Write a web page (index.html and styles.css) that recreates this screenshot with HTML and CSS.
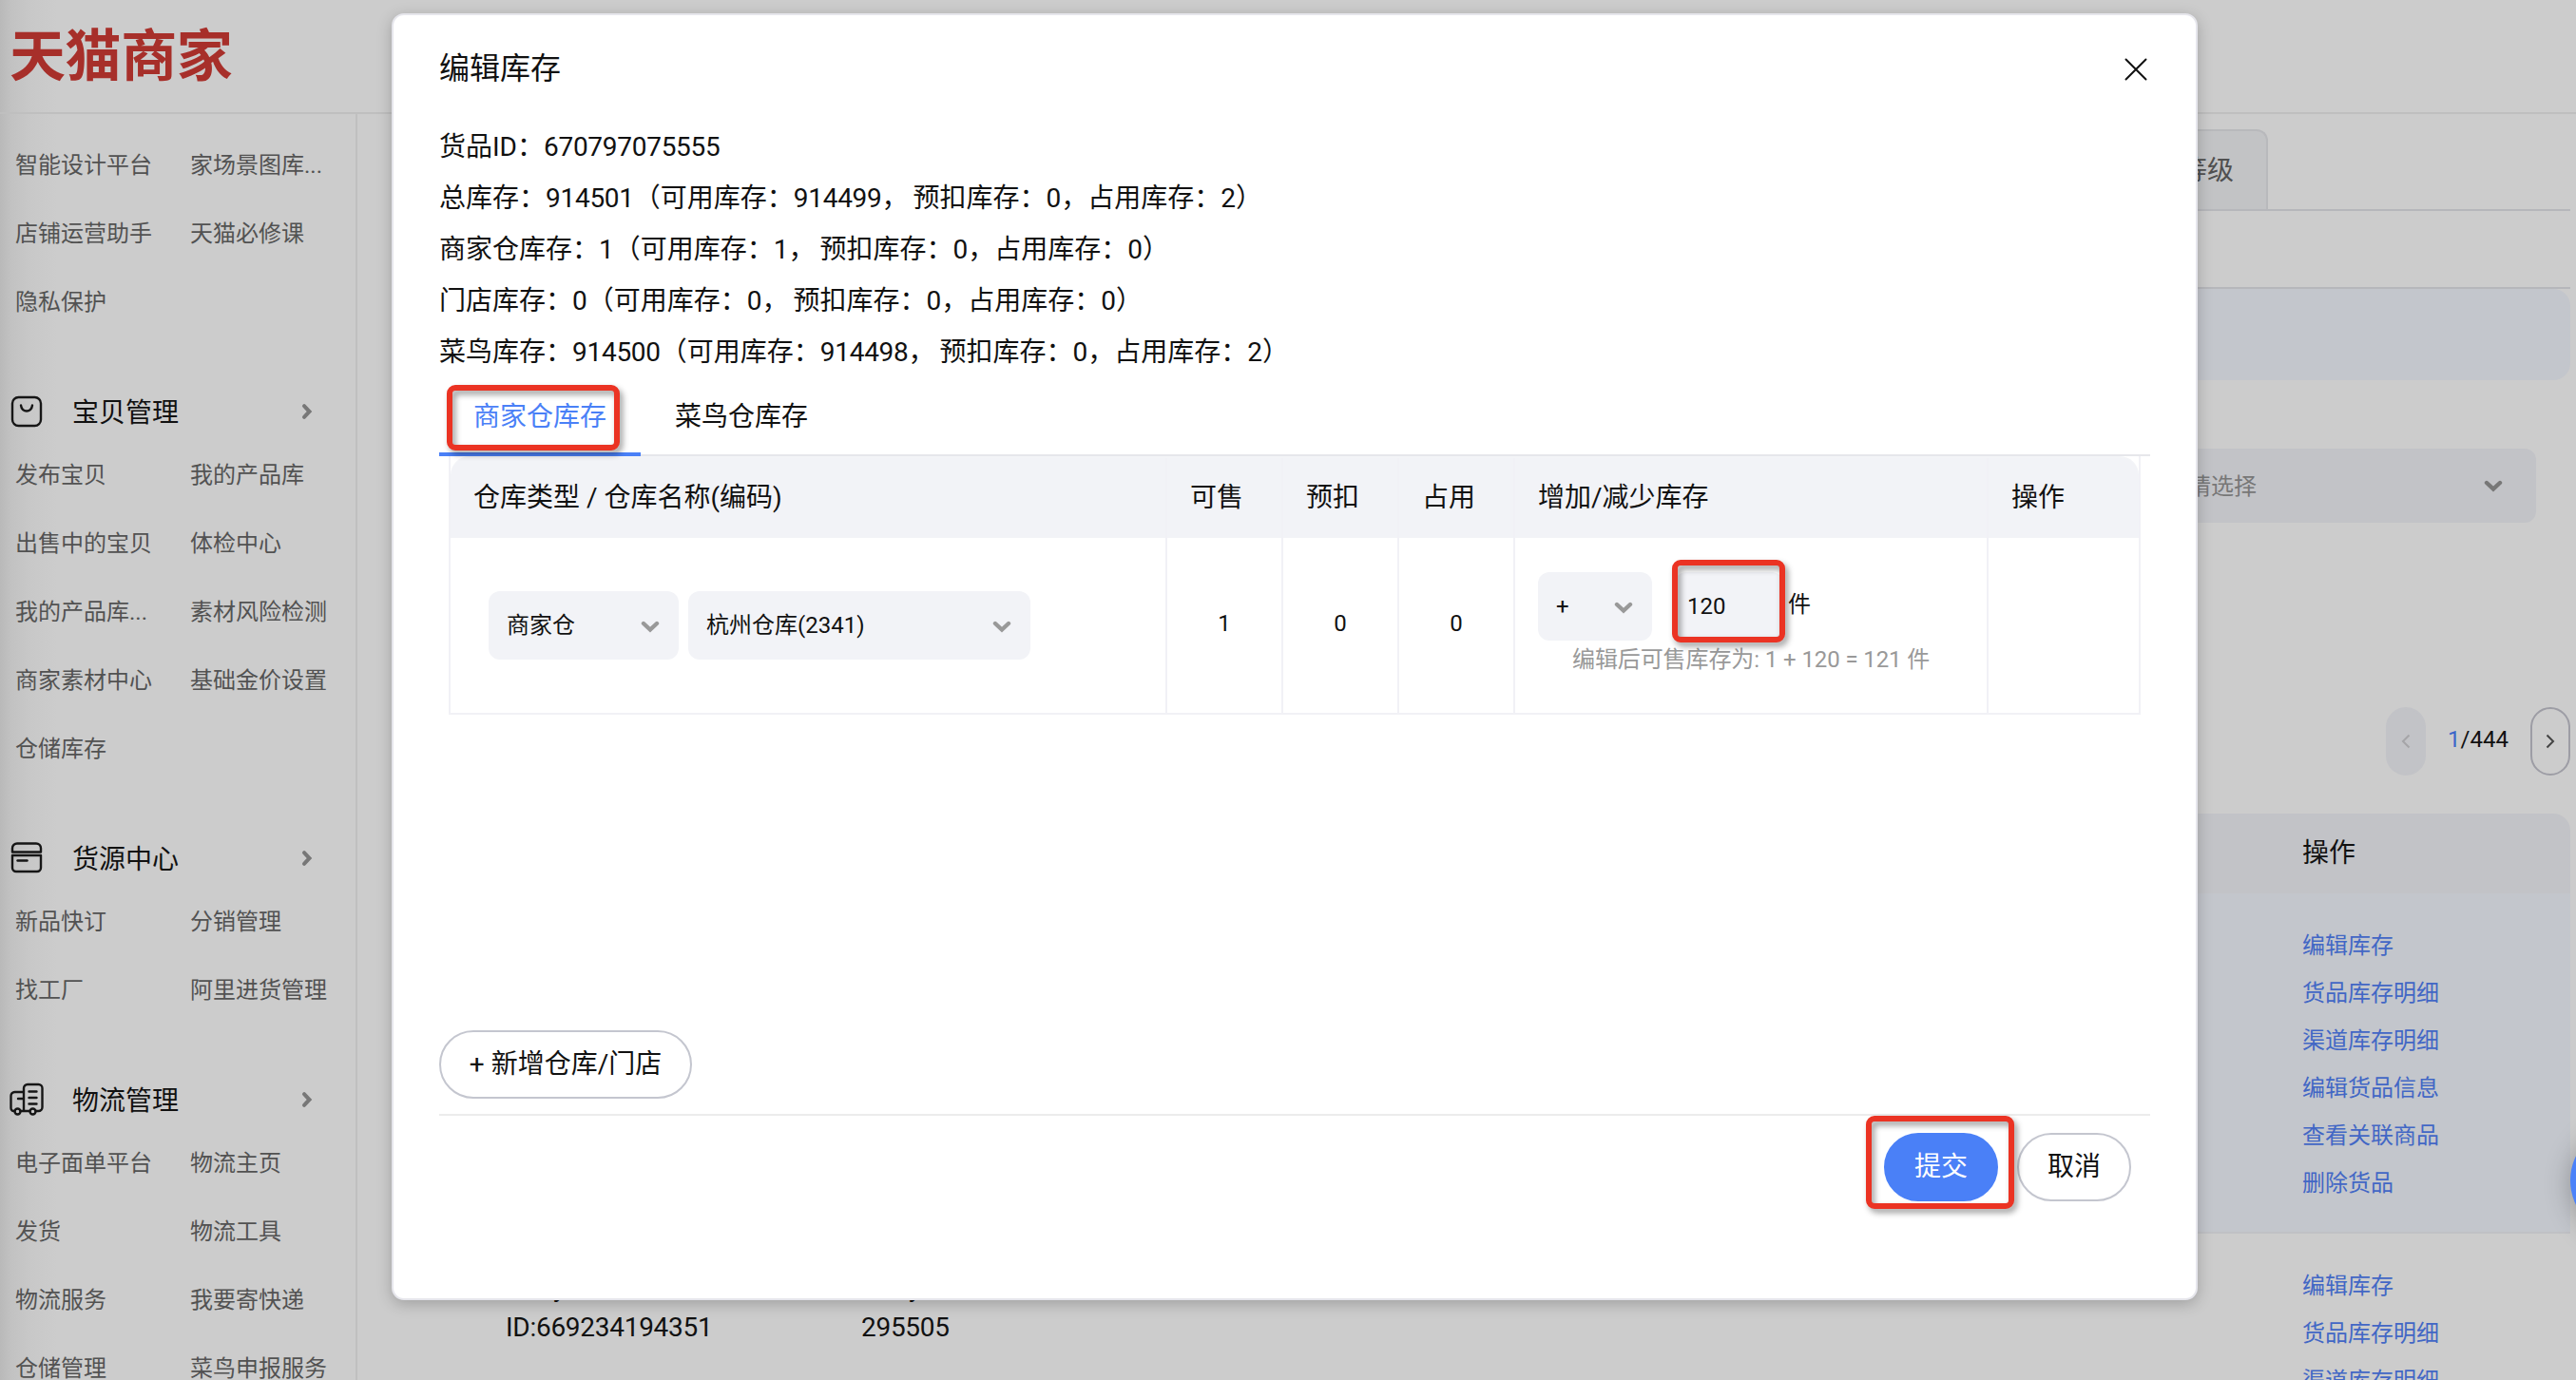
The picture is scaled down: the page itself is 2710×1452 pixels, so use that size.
FILE: index.html
```html
<!DOCTYPE html>
<html lang="zh-CN">
<head>
<meta charset="utf-8">
<title>编辑库存</title>
<link rel="stylesheet" href="styles.css">
</head>
<body>
<svg class="defs" width="0" height="0">
  <symbol id="chev-down" viewBox="0 0 20 14"><path d="M3 4l7 6.500L17 4" fill="none" stroke="currentColor" stroke-width="4.400" stroke-linecap="round" stroke-linejoin="miter"/></symbol>
  <symbol id="chev-right" viewBox="0 0 14 20"><path d="M4 4.200l5.500 5.800L4 15.800" fill="none" stroke="currentColor" stroke-width="4" stroke-linecap="round"/></symbol>
</svg>
<div class="page">
  <header class="topbar"><div class="logo">天猫商家</div></header>
  <div class="body">
    <nav class="sidebar">
      <div class="links"><a>智能设计平台</a><a>家场景图库...</a><a>店铺运营助手</a><a>天猫必修课</a><a>隐私保护</a></div>
      <div class="section-title">
        <svg class="icon" viewBox="0 0 36 36"><rect x="3" y="3" width="30" height="30" rx="6.500"/><path d="M12 11.500c1 8 11 8 12 0"/></svg>
        <span>宝贝管理</span><svg class="arrow"><use href="#chev-right"/></svg>
      </div>
      <div class="links"><a>发布宝贝</a><a>我的产品库</a><a>出售中的宝贝</a><a>体检中心</a><a>我的产品库...</a><a>素材风险检测</a><a>商家素材中心</a><a>基础金价设置</a><a>仓储库存</a></div>
      <div class="section-title">
        <svg class="icon" viewBox="0 0 36 36"><path d="M3 11.500V7.500a5 5 0 0 1 5-5h20a5 5 0 0 1 5 5v4z"/><path d="M3 15h30V28a4 4 0 0 1-4 4H7a4 4 0 0 1-4-4z"/><path d="M8.500 20.500h10"/></svg>
        <span>货源中心</span><svg class="arrow"><use href="#chev-right"/></svg>
      </div>
      <div class="links"><a>新品快订</a><a>分销管理</a><a>找工厂</a><a>阿里进货管理</a></div>
      <div class="section-title">
        <svg class="icon" viewBox="0 0 36 36"><path d="M5.500 30H4.500a3 3 0 0 1-3-3V14a4 4 0 0 1 4-4H15M15 30V6a4 4 0 0 1 4-4h11.500a4 4 0 0 1 4 4v20a4 4 0 0 1-4 4h-3M11.500 30h10M9 17h6M20.500 9.500h8M20.500 16h8M20.500 22.500h8"/><circle cx="8.500" cy="30.500" r="3"/><circle cx="24.500" cy="30.500" r="3"/></svg>
        <span>物流管理</span><svg class="arrow"><use href="#chev-right"/></svg>
      </div>
      <div class="links"><a>电子面单平台</a><a>物流主页</a><a>发货</a><a>物流工具</a><a>物流服务</a><a>我要寄快递</a><a>仓储管理</a><a>菜鸟申报服务</a></div>
    </nav>
    <main class="content">
      <div class="page-tabs"><div class="page-tab">等级</div></div>
      <div class="subbar"></div>
      <div class="notice"></div>
      <div class="filter"><div class="filter-select"><span>请选择</span><svg class="chev"><use href="#chev-down"/></svg></div></div>
      <div class="pager">
        <div class="pager-btn disabled"><svg viewBox="0 0 10 16"><path d="M8.500 1.500L2 8l6.500 6.500"/></svg></div>
        <div class="pager-num"><b>1</b>/444</div>
        <div class="pager-btn"><svg viewBox="0 0 10 16"><path d="M1.500 1.500L8 8l-6.500 6.500"/></svg></div>
      </div>
      <div class="list">
        <div class="list-head"><span>操作</span></div>
        <div class="list-row active"><div></div><div></div>
          <div class="ops"><a>编辑库存</a><a>货品库存明细</a><a>渠道库存明细</a><a>编辑货品信息</a><a>查看关联商品</a><a>删除货品</a></div></div>
        <div class="list-row">
          <div class="cell"><span class="tail-a">y</span><br>ID:669234194351</div>
          <div class="cell"><span class="tail-b">y</span><br>295505</div>
          <div class="ops"><a>编辑库存</a><a>货品库存明细</a><a>渠道库存明细</a></div></div>
      </div>
    </main>
  </div>
  <div class="fab"></div>
</div>

<div class="modal">
  <div class="modal-head"><h1>编辑库存</h1><svg class="close" viewBox="0 0 24 24"><path d="M1.500 1.500l21 21M22.500 1.500l-21 21"/></svg></div>
  <div class="info">
    <p>货品ID：<b>670797075555</b></p>
    <p>总库存：<b>914501</b>（可用库存：<b>914499</b>， 预扣库存：0，占用库存：2）</p>
    <p>商家仓库存：1（可用库存：1， 预扣库存：0，占用库存：0）</p>
    <p>门店库存：0（可用库存：0， 预扣库存：0，占用库存：0）</p>
    <p>菜鸟库存：<b>914500</b>（可用库存：<b>914498</b>， 预扣库存：0，占用库存：2）</p>
  </div>
  <div class="tabs"><div class="tab on">商家仓库存<i class="mark mark-tab"></i></div><div class="tab">菜鸟仓库存</div></div>
  <div class="grid">
    <div class="row head"><div>仓库类型 / 仓库名称(编码)</div><div>可售</div><div>预扣</div><div>占用</div><div>增加/减少库存</div><div>操作</div></div>
    <div class="row data">
      <div class="selects">
        <div class="select type"><span>商家仓</span><svg class="chev"><use href="#chev-down"/></svg></div>
        <div class="select store"><span>杭州仓库(2341)</span><svg class="chev"><use href="#chev-down"/></svg></div>
      </div>
      <div class="num">1</div><div class="num">0</div><div class="num">0</div>
      <div class="adjust">
        <div class="adjust-line">
          <div class="select sign"><span>+</span><svg class="chev"><use href="#chev-down"/></svg></div>
          <div class="qty">120<i class="mark mark-qty"></i></div>
          <span class="unit">件</span>
        </div>
        <div class="hint">编辑后可售库存为: 1 + 120 = 121 件</div>
      </div>
      <div></div>
    </div>
  </div>
  <div class="add-line"><button class="btn add">+ 新增仓库/门店</button></div>
  <div class="actions">
    <button class="btn primary">提交<i class="mark mark-submit"></i></button>
    <button class="btn">取消</button>
  </div>
</div>
</body>
</html>
```
FILE: styles.css
```css
* { box-sizing: border-box; }
body { margin: 0; width: 2710px; height: 1452px; overflow: hidden; position: relative; background: #ccc; color: #111; font: 28px/42px Roboto, "Noto Sans CJK SC", sans-serif; }
h1, p { margin: 0; font-weight: 400; }
.defs { position: absolute; }

.page { height: 1452px; overflow: hidden; background: linear-gradient(90deg, #b9b9b9 0, #c2c2c2 12px, #c8c8c8 32px, #ccc 60px); }
.topbar { height: 120px; border-bottom: 2px solid #bfbfbf; padding: 12px 0 0 10px; }
.logo { color: #a72f2a; font: 700 59px/86px "Noto Sans CJK SC", sans-serif; letter-spacing: -0.400px; }
.body { display: flex; height: 1332px; }

.sidebar { width: 376px; flex: none; border-right: 2px solid #c0c0c0; padding-top: 18px; }
.links { display: grid; grid-template-columns: 184px 1fr; grid-auto-rows: 72px; padding-left: 16px; color: #525252; font-size: 24px; line-height: 72px; white-space: nowrap; }
.section-title { display: flex; align-items: center; height: 62px; margin-top: 48px; padding-left: 10px; }
.section-title span { width: 238px; margin-left: 30px; padding-top: 4px; }
.icon { width: 36px; height: 36px; fill: none; stroke: #161616; stroke-width: 2.400; stroke-linecap: round; stroke-linejoin: round; }
.arrow { width: 14px; height: 20px; color: #777; margin-left: 2px; }

.content { flex: 1; margin-left: 40px; padding-right: 6px; }
.page-tabs { display: flex; height: 102px; padding-top: 16px; border-bottom: 2px solid #b6b7bb; }
.page-tab { margin-left: 1740px; width: 230px; padding-left: 136px; background: #c2c3c5; border: 2px solid #b8b9bc; border-bottom: 0; border-radius: 0 12px 0 0; line-height: 83px; color: #505050; }
.subbar { height: 82px; border-bottom: 2px solid #b6b7bb; }
.notice { height: 96px; background: #c3c6cc; border-radius: 0 18px 18px 0; }
.filter { display: flex; justify-content: flex-end; padding: 72px 36px 0 0; }
.filter-select { display: flex; justify-content: space-between; align-items: center; width: 388px; height: 78px; padding: 0 35px 0 22px; border-radius: 12px; background: #c2c3c7; color: #777; font-size: 24px; }
.chev { width: 20px; height: 14px; flex: none; }
.filter .chev { color: #777; }
.filter span { padding-top: 2px; }
.pager { display: flex; justify-content: flex-end; margin-top: 194px; height: 72px; }
.pager-btn { display: flex; align-items: center; justify-content: center; width: 42px; border: 2px solid #9d9da5; border-radius: 21px; }
.pager-btn svg { width: 10px; height: 16px; fill: none; stroke: #444; stroke-width: 2; }
.pager-btn.disabled { background: #c2c3c7; border-color: #c2c3c7; }
.pager-btn.disabled svg { stroke: #a5a5a8; }
.pager-num { width: 110px; padding-left: 23px; font-size: 24px; line-height: 68px; }
.pager-num b { color: #3b66c9; font-weight: 400; }
.list { margin-top: 40px; }
.list-head { height: 84px; padding-left: 2006px; line-height: 83px; background: #c2c3c7; border-radius: 0 18px 0 0; }
.list-row { display: grid; grid-template-columns: 374px 1516px 1fr; height: 358px; padding-left: 116px; }
.list-row.active { background: #c3c6cc; border-bottom: 2px solid #c0c1c5; }
.ops { display: flex; flex-direction: column; padding-top: 30px; color: #4267c5; font-size: 24px; line-height: 50px; }
.cell { padding-top: 36px; letter-spacing: -0.280px; }
.tail-a { padding-left: 50px; }
.tail-b { padding-left: 50px; }
.fab { position: absolute; left: 2704px; top: 1184px; width: 116px; height: 116px; border-radius: 50%; background: #4b82f9; box-shadow: 0 4px 28px rgba(0, 0, 0, .28); }

.modal { position: absolute; left: 412px; top: 14px; width: 1900px; height: 1354px; padding: 0 48px; background: #fff; border: 2px solid #e6e6ec; border-radius: 13px; box-shadow: 0 4px 16px rgba(0, 0, 0, .22); }
.modal-head { display: flex; justify-content: space-between; align-items: center; height: 112px; padding-right: 3px; }
.modal-head h1 { font-size: 32px; line-height: 48px; }
.close { width: 24px; height: 24px; margin-top: 2px; fill: none; stroke: #111; stroke-width: 2; stroke-linecap: round; }
.info { height: 268px; line-height: 54px; white-space: nowrap; word-spacing: -2px; }
.info b { font-weight: 400; letter-spacing: -0.280px; }
.tabs { display: flex; height: 84px; border-bottom: 2px solid #e6e7eb; }
.tab { position: relative; width: 212px; height: 84px; padding-left: 36px; line-height: 85px; white-space: nowrap; }
.tab.on { color: #4a80f7; border-bottom: 4px solid #4a80f7; }

.grid { margin: 0 10px; border-left: 2px solid #f1f1f6; border-right: 2px solid #f1f1f6; }
.row { display: grid; grid-template-columns: 754px 122px 122px 122px 498px 1fr; }
.row > div { border-right: 2px solid #f1f1f6; }
.row > div:last-child { border-right: 0; }
.head { height: 86px; border-top: 2px solid #f3f4f7; background: #f2f3f7; border-radius: 20px 20px 0 0; line-height: 83px; }
.head > div { padding-left: 24px; }
.data { height: 186px; border-bottom: 2px solid #f1f1f6; font-size: 24px; }
.selects { display: flex; gap: 10px; padding: 56px 0 0 40px; }
.select { display: flex; align-items: center; justify-content: space-between; height: 72px; padding: 0 20px 0 19px; background: #f2f3f7; border-radius: 12px; }
.select .chev { color: #999; margin-top: 2px; }
.type { width: 200px; }
.store { width: 360px; }
.num { text-align: center; line-height: 180px; }
.adjust { padding: 36px 0 0 24px; }
.adjust-line { display: flex; align-items: center; }
.sign { width: 120px; }
.qty { position: relative; width: 114px; height: 72px; margin-left: 24px; padding-left: 13px; line-height: 72px; background: #f2f3f7; border-radius: 12px; }
.unit { margin: -4px 0 0 5px; }
.hint { margin: -1px 0 0 36px; color: #999; line-height: 42px; letter-spacing: -0.100px; }

.add-line { height: 422px; padding-top: 332px; border-bottom: 2px solid #ececec; }
.btn { position: relative; width: 120px; height: 72px; padding: 0; border: 2px solid #c4c6cf; border-radius: 36px; background: #fff; color: #111; font: inherit; }
.btn.add { width: 266px; }
.btn.primary { background: #4a80f7; border-color: #4a80f7; color: #fff; }
.actions { display: flex; justify-content: flex-end; gap: 20px; padding: 18px 20px 0; }

/* Red callout frames over the highlighted controls */
.mark { position: absolute; border: 6px solid #eb3323; border-radius: 9px; filter: drop-shadow(3px 4px 3px rgba(0, 0, 0, .4)); z-index: 2; }
.mark-tab { left: 8px; top: 9px; width: 182px; height: 69px; }
.mark-qty { left: -3px; top: -13px; width: 119px; height: 87px; }
.mark-submit { left: -21px; top: -20px; width: 156px; height: 98px; }
```
